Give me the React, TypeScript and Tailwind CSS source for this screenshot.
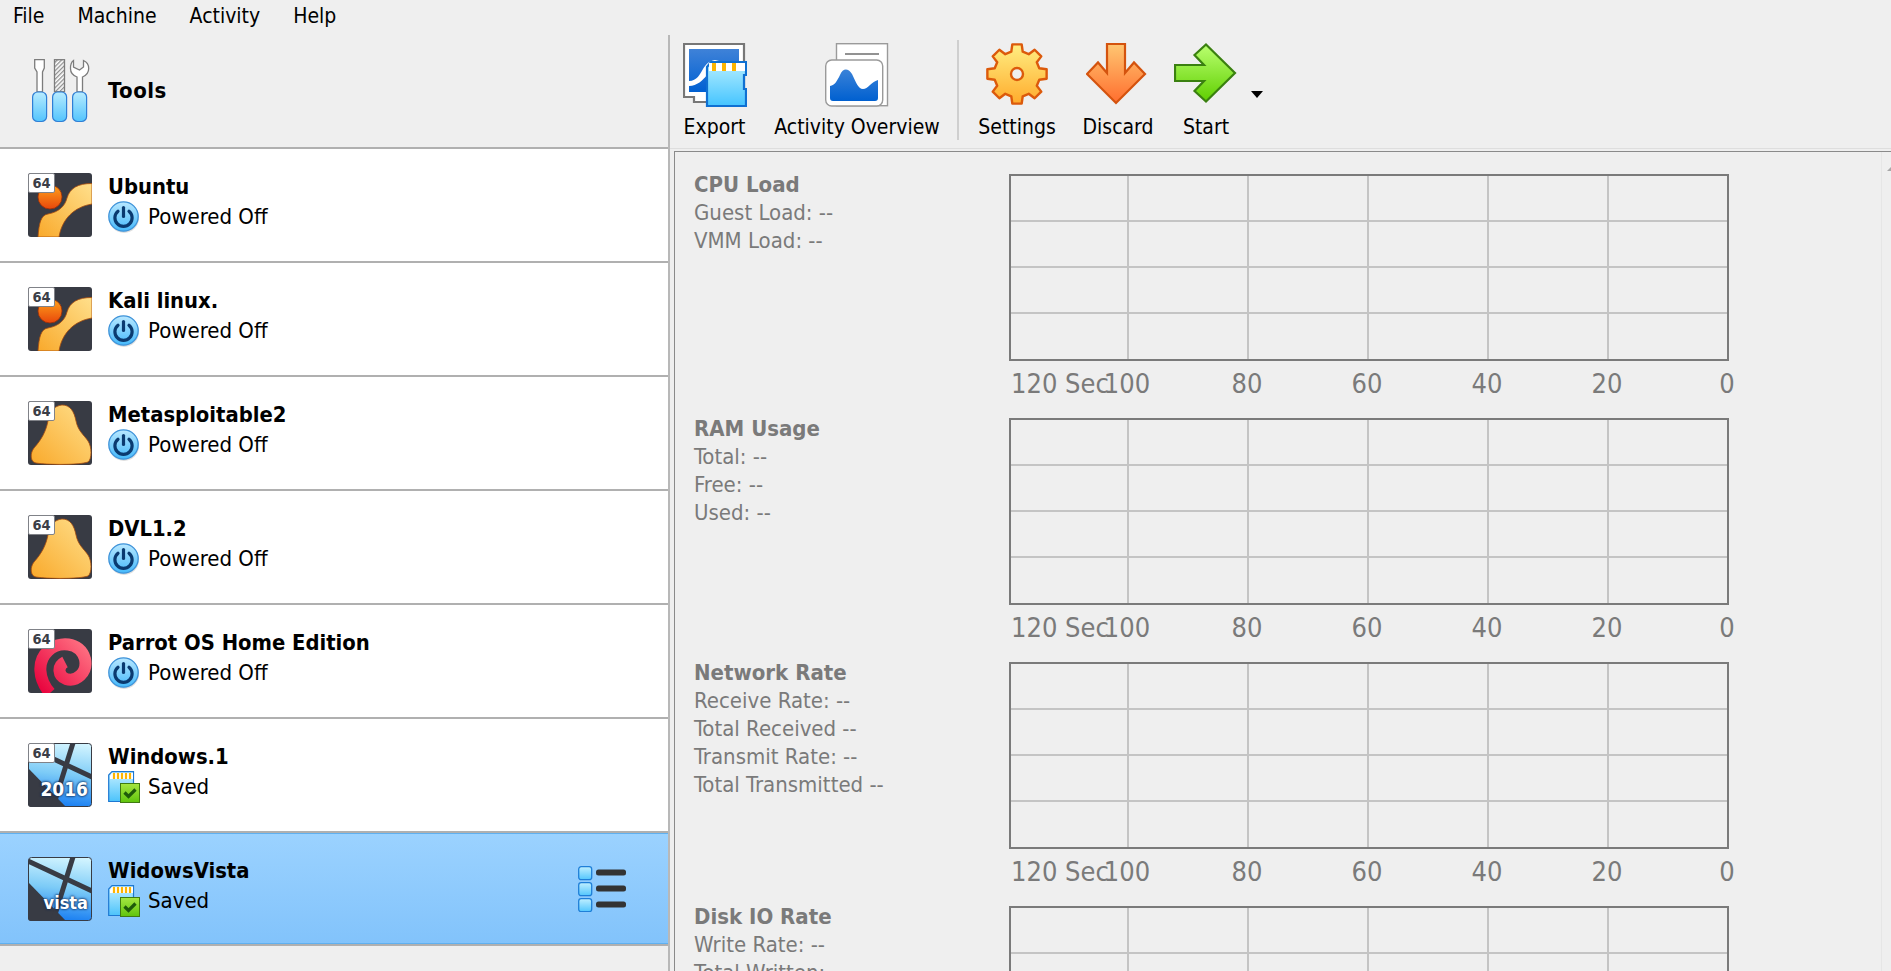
import React from "react";

const FONT = "font-['DejaVu_Sans_Condensed','DejaVu_Sans',sans-serif]";

function gearPath(cx: number, cy: number, ro: number, ri: number, n: number) {
  const pts: string[] = [];
  const step = (Math.PI * 2) / n;
  for (let i = 0; i < n; i++) {
    const a = -Math.PI / 2 + i * step;
    const o = step * 0.2;
    const m = step * 0.32;
    const p = (r: number, t: number) => `${(cx + r * Math.cos(t)).toFixed(2)} ${(cy + r * Math.sin(t)).toFixed(2)}`;
    pts.push(p(ri, a - m), p(ro, a - o), p(ro, a + o), p(ri, a + m));
  }
  return "M" + pts.join(" L") + " Z";
}

function PowerIcon() {
  return (
    <svg width="32" height="32" viewBox="0 0 32 32" className="shrink-0">
      <defs>
        <linearGradient id="pw" x1="0" y1="0" x2="0" y2="1">
          <stop offset="0" stopColor="#b9e8ff" />
          <stop offset="1" stopColor="#45b9fb" />
        </linearGradient>
      </defs>
      <circle cx="16" cy="17" r="15" fill="#bdbdbd" opacity="0.5" />
      <circle cx="15.5" cy="15.5" r="14.7" fill="url(#pw)" stroke="#3f93d9" strokeWidth="1.3" />
      <path d="M10 10.2 A8.6 8.6 0 1 0 21 10.2" fill="none" stroke="#0a3a70" strokeWidth="3.2" strokeLinecap="round" />
      <path d="M15.5 6.5 V15.5" fill="none" stroke="#0a3a70" strokeWidth="3.2" strokeLinecap="round" />
    </svg>
  );
}

function SavedIcon() {
  return (
    <svg width="32" height="32" viewBox="0 0 32 32" className="shrink-0">
      <defs>
        <linearGradient id="sd" x1="0" y1="0" x2="0" y2="1">
          <stop offset="0" stopColor="#c5f0ff" />
          <stop offset="1" stopColor="#4cc3fb" />
        </linearGradient>
        <linearGradient id="ck" x1="0" y1="0" x2="0" y2="1">
          <stop offset="0" stopColor="#a6e642" />
          <stop offset="1" stopColor="#5fc40c" />
        </linearGradient>
      </defs>
      <path d="M4 0.7 H25.5 V30.5 H0.7 V4 Z" fill="url(#sd)" stroke="#1d78d2" strokeWidth="1.2" />
      <path d="M4 2 H25 V8 H2 V5 Z" fill="#fff" />
      <path d="M6 2v6M10 2v6M14 2v6M18 2v6M22 2v6" stroke="#fdb400" strokeWidth="2.2" />
      <rect x="12.5" y="12.5" width="19" height="19" fill="url(#ck)" stroke="#3f7a12" />
      <path d="M16.5 21.5 L20.5 25.5 L27.5 18.5" fill="none" stroke="#1f5a0a" strokeWidth="3.2" />
    </svg>
  );
}

function UbuntuShape() {
  return (
    <svg width="64" height="64" viewBox="0 0 64 64" className="block">
      <defs>
        <linearGradient id="ub1" x1="0" y1="0" x2="0" y2="1">
          <stop offset="0" stopColor="#ffa31c" />
          <stop offset="1" stopColor="#e8470b" />
        </linearGradient>
        <linearGradient id="ub2" x1="1" y1="0" x2="0" y2="1">
          <stop offset="0" stopColor="#ffe08c" />
          <stop offset="1" stopColor="#f9a92b" />
        </linearGradient>
      </defs>
      <rect width="64" height="64" rx="3" fill="#383b44" />
      <circle cx="22" cy="24" r="12" fill="url(#ub1)" stroke="#9c2d06" strokeWidth="0.8" />
      <path d="M64 10.5 C50 10.5 42 15 39 25 C37 33 31 39 20 41 C13 42 11 50 10 64 L31 64 C34 46 46 34 64 31 Z" fill="url(#ub2)" stroke="#a84c0c" strokeWidth="0.8" />
    </svg>
  );
}

function BellShape() {
  return (
    <svg width="64" height="64" viewBox="0 0 64 64" className="block">
      <defs>
        <linearGradient id="bl" x1="1" y1="0" x2="0" y2="1">
          <stop offset="0" stopColor="#ffe08c" />
          <stop offset="1" stopColor="#f9a92b" />
        </linearGradient>
      </defs>
      <rect width="64" height="64" rx="3" fill="#383b44" />
      <path d="M34 4 C42 4 46 10 48 20 C50 30 56 34 60 40 C64 46 64 58 60 61 C52 64 20 64 8 62 C2 61 2 52 6 47 C14 38 18 30 20 20 C22 10 26 5 34 4 Z" fill="url(#bl)" stroke="#a84c0c" strokeWidth="0.8" />
    </svg>
  );
}

function ParrotShape() {
  return (
    <svg width="64" height="64" viewBox="0 0 64 64" className="block">
      <defs>
        <linearGradient id="pr" x1="0" y1="1" x2="1" y2="0">
          <stop offset="0" stopColor="#e8003c" />
          <stop offset="1" stopColor="#ff7182" />
        </linearGradient>
      </defs>
      <rect width="64" height="64" rx="3" fill="#383b44" />
      <path d="M22 64 C10 50 9 32 20 22 C30 12 52 12 57 30 C60 44 48 53 38 50 C30 47 29 37 37 33" fill="none" stroke="url(#pr)" strokeWidth="12" strokeLinecap="butt" />
    </svg>
  );
}

function WindowsShape({ id }: { id: string }) {
  return (
    <svg width="64" height="64" viewBox="0 0 64 64" className="block">
      <defs>
        <linearGradient id={id} x1="0.7" y1="0" x2="0.6" y2="1">
          <stop offset="0" stopColor="#d2f4ff" />
          <stop offset="0.5" stopColor="#7ccbf7" />
          <stop offset="1" stopColor="#1a7ff2" />
        </linearGradient>
      </defs>
      <rect x="0.5" y="0.5" width="63" height="63" rx="3" fill={`url(#${id})`} stroke="#383b44" />
      <path d="M0 25 L38 64 H3 Q0 64 0 61 Z" fill="#383b44" />
      <path d="M45 0 L25 64" stroke="#383b44" strokeWidth="5" />
      <path d="M0 4 L64 34" stroke="#383b44" strokeWidth="5" />
    </svg>
  );
}

function ToolsIcon() {
  const handle = (x: number) => (
    <rect x={x + 0.6} y="33" width="14" height="29.5" rx="5" fill="url(#th)" stroke="#2f7fd6" strokeWidth="1.2" />
  );
  return (
    <svg width="58" height="64" viewBox="0 0 58 64" className="block">
      <defs>
        <linearGradient id="th" x1="0" y1="0" x2="0" y2="1">
          <stop offset="0" stopColor="#b8ecff" />
          <stop offset="1" stopColor="#52c4fd" />
        </linearGradient>
        <pattern id="hatch" width="3" height="3" patternUnits="userSpaceOnUse" patternTransform="rotate(45)">
          <rect width="3" height="3" fill="#fff" />
          <rect width="1.3" height="3" fill="#8e8e8e" />
        </pattern>
      </defs>
      <path d="M2.7 0.7 H12.3 V9 L10.5 13 V33 H5 V13 L2.7 9 Z" fill="#fff" stroke="#7c7c7c" strokeWidth="1.3" />
      <rect x="22.5" y="0.7" width="10" height="32" fill="url(#hatch)" stroke="#7c7c7c" strokeWidth="1.3" />
      <path d="M41.5 1.5 V8 L47.5 11 L51.5 8 V1.5 C55 3 56.7 6 56.7 9.5 C56.7 14 54 16.5 50.5 18 V33 H45 V18 C41 16.5 38.5 14 38.5 9.5 C38.5 6 39 3 41.5 1.5 Z" fill="#fff" stroke="#7c7c7c" strokeWidth="1.3" />
      {handle(0)}
      {handle(20)}
      {handle(40)}
    </svg>
  );
}

function ExportIcon() {
  return (
    <svg width="64" height="64" viewBox="0 0 64 64" className="block">
      <defs>
        <linearGradient id="ex1" x1="0" y1="0" x2="0" y2="1">
          <stop offset="0" stopColor="#3f82d8" />
          <stop offset="1" stopColor="#0060d2" />
        </linearGradient>
        <linearGradient id="ex2" x1="0" y1="0" x2="0" y2="1">
          <stop offset="0" stopColor="#b4eeff" />
          <stop offset="1" stopColor="#45c4ff" />
        </linearGradient>
      </defs>
      <path d="M1 1 H61 V50 H30 V59 H11 V54 H1 Z" fill="#fff" stroke="#777" strokeWidth="2.2" />
      <rect x="6" y="6" width="50" height="43" fill="url(#ex1)" />
      <path d="M6 38 C14 38 17 31 20 26 C23 21 26 18 32 17 L36 18 C30 21 28 27 24 32 C20 37 14 43 6 43 Z" fill="#fff" />
      <path d="M28 19 H63 V32 L61 32 V46 L63 46 V63 H24 V24 Z" fill="url(#ex2)" stroke="#0f70d2" strokeWidth="2.2" />
      <path d="M26 20 H62 V28 H26 Z" fill="#fff" />
      <path d="M31 20v8M41 20v8M51 20v8" stroke="#fdb400" strokeWidth="4" />
    </svg>
  );
}

function ActivityIcon() {
  return (
    <svg width="64" height="64" viewBox="0 0 64 64" className="block">
      <defs>
        <linearGradient id="ac" x1="0" y1="0" x2="0" y2="1">
          <stop offset="0" stopColor="#3a82d8" />
          <stop offset="1" stopColor="#0060d0" />
        </linearGradient>
      </defs>
      <rect x="11.5" y="0.7" width="51" height="62" fill="#fff" stroke="#9a9a9a" strokeWidth="1.4" />
      <path d="M20 11 H54" stroke="#6e6e6e" strokeWidth="1.6" />
      <rect x="0.7" y="17" width="57" height="46" rx="6" fill="#fff" stroke="#9a9a9a" strokeWidth="1.4" />
      <path d="M5 43 C10 42 12 38 15 32 C18 25 23 25 27 31 C31 39 33 46 38 46 C43 46 46 39 53 37 V55 Q53 58 50 58 H8 Q5 58 5 55 Z" fill="url(#ac)" />
    </svg>
  );
}

function SettingsIcon() {
  return (
    <svg width="64" height="64" viewBox="0 0 64 64" className="block">
      <defs>
        <linearGradient id="ge" x1="0" y1="0" x2="0" y2="1">
          <stop offset="0" stopColor="#ffee82" />
          <stop offset="1" stopColor="#ffab2c" />
        </linearGradient>
      </defs>
      <path d={gearPath(32, 31, 30, 23, 8)} fill="url(#ge)" stroke="#dc5a0b" strokeWidth="2.4" strokeLinejoin="round" />
      <circle cx="32" cy="31" r="6" fill="#efefef" stroke="#dc5a0b" strokeWidth="2.4" />
    </svg>
  );
}

function DiscardIcon() {
  return (
    <svg width="64" height="64" viewBox="0 0 64 64" className="block">
      <defs>
        <linearGradient id="di" x1="0" y1="0" x2="0" y2="1">
          <stop offset="0" stopColor="#ffc672" />
          <stop offset="1" stopColor="#ff6e2e" />
        </linearGradient>
      </defs>
      <path d="M21 1 H39 V30 L48 19.5 L59 31 L30 60 L1 31 L12 19.5 L21 30 Z" fill="url(#di)" stroke="#d4530e" strokeWidth="2.2" />
    </svg>
  );
}

function StartIcon() {
  return (
    <svg width="64" height="64" viewBox="0 0 64 64" className="block">
      <defs>
        <linearGradient id="st" x1="0" y1="0" x2="0" y2="1">
          <stop offset="0" stopColor="#baff70" />
          <stop offset="1" stopColor="#5fcf00" />
        </linearGradient>
      </defs>
      <path d="M32 1.5 L61 30 L32 58.5 L20.5 48 L30 38 H1 V22 H30 L20.5 12 Z" fill="url(#st)" stroke="#3a8010" strokeWidth="2.2" />
    </svg>
  );
}

function DetailsIcon() {
  const row = (y: number) => (
    <g key={y}>
      <rect x="0.7" y={y + 0.7} width="13" height="13" rx="2.5" fill="url(#dt)" stroke="#1f7fd8" strokeWidth="1.3" />
      <rect x="18" y={y + 3.5} width="30" height="6" rx="2.5" fill="#333" />
    </g>
  );
  return (
    <svg width="48" height="46" viewBox="0 0 48 46" className="block">
      <defs>
        <linearGradient id="dt" x1="0" y1="0" x2="0" y2="1">
          <stop offset="0" stopColor="#c0efff" />
          <stop offset="1" stopColor="#52c6fd" />
        </linearGradient>
      </defs>
      {row(0)}
      {row(16)}
      {row(32)}
    </svg>
  );
}

type Os = "ubuntu" | "bell" | "parrot" | "win2016" | "vista";
type Vm = { name: string; state: "off" | "saved"; os: Os; selected?: boolean };

const vms: Vm[] = [
  { name: "Ubuntu", state: "off", os: "ubuntu" },
  { name: "Kali linux.", state: "off", os: "ubuntu" },
  { name: "Metasploitable2", state: "off", os: "bell" },
  { name: "DVL1.2", state: "off", os: "bell" },
  { name: "Parrot OS Home Edition", state: "off", os: "parrot" },
  { name: "Windows.1", state: "saved", os: "win2016" },
  { name: "WidowsVista", state: "saved", os: "vista", selected: true },
];

function OsIcon({ os, idx }: { os: Os; idx: number }) {
  return (
    <div className="relative w-16 h-16 shrink-0">
      {os === "ubuntu" && <UbuntuShape />}
      {os === "bell" && <BellShape />}
      {os === "parrot" && <ParrotShape />}
      {os === "win2016" && <WindowsShape id={`w${idx}`} />}
      {os === "vista" && <WindowsShape id={`w${idx}`} />}
      {os !== "vista" && (
        <div className="absolute left-0 top-0 w-[27px] h-[20px] bg-white border border-[#808288] rounded-[2px] flex items-center justify-center text-[14.5px] leading-none font-bold text-[#3b3e47]">
          64
        </div>
      )}
      {os === "win2016" && (
        <div className="absolute right-[4px] bottom-[8px] text-[19px] leading-none font-bold text-white [text-shadow:0_0_3px_#0b2a5a,0_0_2px_#0b2a5a]">
          2016
        </div>
      )}
      {os === "vista" && (
        <div className="absolute right-[4px] bottom-[9px] text-[18px] leading-none font-bold text-white [text-shadow:0_0_3px_#0b2a5a,0_0_2px_#0b2a5a]">
          vista
        </div>
      )}
    </div>
  );
}

function VmRow({ vm, idx }: { vm: Vm; idx: number }) {
  if (vm.selected) {
    return (
      <div className="h-[113px] shrink-0 border-b-2 border-[#b0b0b0]">
        <div className="pl-[28px] w-full flex h-[111px] bg-gradient-to-b from-[#9bd2ff] to-[#82c3fb] border-y border-[#5fb0f0]">
          <div className="mt-[23px]">
            <OsIcon os={vm.os} idx={idx} />
          </div>
          <div className="-mt-px">
            <VmText vm={vm} />
          </div>
          <div className="ml-auto mr-[42px] mt-[32px]">
            <DetailsIcon />
          </div>
        </div>
      </div>
    );
  }
  return (
    <div className="h-[114px] shrink-0 pl-[28px] flex border-b-2 border-[#b0b0b0] bg-white">
      <div className="mt-[24px]">
        <OsIcon os={vm.os} idx={idx} />
      </div>
      <VmText vm={vm} />
    </div>
  );
}

function VmText({ vm }: { vm: Vm }) {
  return (
    <div className="ml-4 mt-[24px] flex flex-col">
      <div className="h-[28px] leading-[28px] text-[21.8px] font-bold text-black">{vm.name}</div>
      <div className="h-[32px] flex items-center gap-[8px] text-[22px] text-black">
        {vm.state === "off" ? <PowerIcon /> : <SavedIcon />}
        <span className="-mt-px">{vm.state === "off" ? "Powered Off" : "Saved"}</span>
      </div>
    </div>
  );
}

function Chart() {
  const cols = [118, 120, 120, 120, 120, 118];
  const cells = [0, 1, 2, 3];
  return (
    <div>
      <div className="w-[720px] h-[187px] border-2 border-[#7a7a7a] grid grid-cols-[118px_120px_120px_120px_120px_118px] grid-rows-[46px_46px_46px_45px]">
        {cells.map((r) =>
          cols.map((_, c) => (
            <div
              key={`${r}-${c}`}
              className={
                (c < 5 ? "border-r-2 " : "") + (r < 3 ? "border-b-2 " : "") + "border-[#c4c4c4]"
              }
            />
          ))
        )}
      </div>
      <div className="flex h-[44px] items-center text-[27px] text-[#7a7a7a] leading-none w-[720px]">
        <div className="w-[118px] pl-[2px] whitespace-nowrap">120 Sec</div>
        {["100", "80", "60", "40", "20", "0"].map((t, i) => (
          <div key={t} className={i < 5 ? "w-[120px] flex" : "w-0 flex"}>
            <div className="w-0 flex justify-center">
              <span>{t}</span>
            </div>
          </div>
        ))}
      </div>
    </div>
  );
}

function Section({ title, lines }: { title: string; lines: string[] }) {
  return (
    <div className="h-[244px] shrink-0 flex">
      <div className="w-[315px] -mt-[3px] text-[#7a7a7a]">
        <div className="h-[28px] leading-[28px] text-[22px] font-bold">{title}</div>
        {lines.map((l) => (
          <div key={l} className="h-[28px] leading-[28px] text-[22px]">
            {l}
          </div>
        ))}
      </div>
      <Chart />
    </div>
  );
}

function ToolButton({ w, label, icon }: { w: string; label: string; icon: React.ReactNode }) {
  return (
    <div className={`${w} flex flex-col items-center`}>
      <div className="h-16">{icon}</div>
      <div className="mt-[6px] h-[28px] leading-[28px] text-[21px] text-black whitespace-nowrap">{label}</div>
    </div>
  );
}

export default function App() {
  return (
    <div className={`${FONT} w-[1891px] h-[971px] overflow-hidden flex flex-col bg-[#efefef]`}>
      <div className="h-[33px] mb-[2px] shrink-0 flex items-center text-[21px] text-black pl-[13px] gap-[33px]">
        <span>File</span>
        <span>Machine</span>
        <span>Activity</span>
        <span>Help</span>
      </div>
      <div className="flex-1 flex min-h-0">
        <div className="w-[668px] shrink-0 flex flex-col">
          <div className="h-[114px] shrink-0 border-b-2 border-[#b0b0b0] flex items-start pl-[32px]">
            <div className="mt-[24px]">
              <ToolsIcon />
            </div>
            <div className="ml-[18px] mt-[42px] h-[28px] leading-[28px] text-[22px] font-bold text-black tracking-[0.5px]">Tools</div>
          </div>
          {vms.map((vm, i) => (
            <VmRow key={vm.name} vm={vm} idx={i} />
          ))}
        </div>
        <div className="w-[2px] shrink-0 bg-[#b8b8b8]" />
        <div className="flex-1 flex flex-col min-w-0">
          <div className="h-[114px] shrink-0 border-b border-[#dedede] flex items-start pt-[8px] pl-[2px]">
            <ToolButton w="w-[85px]" label="Export" icon={<ExportIcon />} />
            <ToolButton w="w-[200px]" label="Activity Overview" icon={<ActivityIcon />} />
            <div className="w-[2px] h-[100px] -mt-[3px] bg-[#cfcfcf]" />
            <ToolButton w="w-[116px]" label="Settings" icon={<SettingsIcon />} />
            <ToolButton w="w-[86px]" label="Discard" icon={<DiscardIcon />} />
            <ToolButton w="w-[90px]" label="Start" icon={<StartIcon />} />
            <svg width="12" height="7" viewBox="0 0 12 7" className="mt-[48px]">
              <path d="M0 0 H12 L6 7 Z" fill="#000" />
            </svg>
          </div>
          <div className="flex-1 min-h-0 flex pl-[4px] pt-[2px]">
            <div className="flex-1 min-w-0 border-t border-l border-[#8a8a8a] flex overflow-hidden">
              <div className="flex-1 min-w-0 pl-[19px] pt-[22px] flex flex-col">
                <Section title="CPU Load" lines={["Guest Load: --", "VMM Load: --"]} />
                <Section title="RAM Usage" lines={["Total: --", "Free: --", "Used: --"]} />
                <Section
                  title="Network Rate"
                  lines={["Receive Rate: --", "Total Received --", "Transmit Rate: --", "Total Transmitted --"]}
                />
                <Section title="Disk IO Rate" lines={["Write Rate: --", "Total Written: --", "Read Rate: --", "Total Read: --"]} />
              </div>
              <div className="w-[10px] shrink-0 border-l border-[#e6e6e6] pt-[13px] overflow-hidden">
                <svg width="12" height="6" viewBox="0 0 12 6" className="ml-[5px] block">
                  <path d="M0 6 L6 0 L12 6 Z" fill="#a8a8a8" />
                </svg>
              </div>
            </div>
          </div>
        </div>
      </div>
    </div>
  );
}
